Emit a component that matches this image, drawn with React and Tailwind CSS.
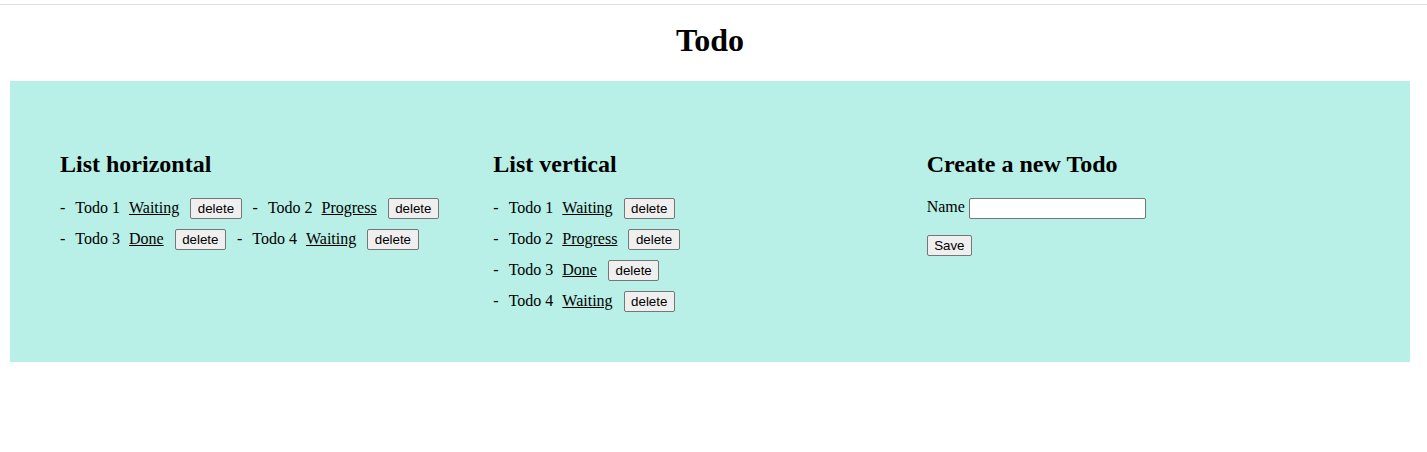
import { useState } from 'react';

const initialTodos = [
  { id: 1, name: 'Todo 1', status: 'Waiting' },
  { id: 2, name: 'Todo 2', status: 'Progress' },
  { id: 3, name: 'Todo 3', status: 'Done' },
  { id: 4, name: 'Todo 4', status: 'Waiting' },
];

const serif = "font-['Liberation_Serif','Times_New_Roman',serif]";
const btn =
  "font-['Liberation_Sans',Arial,sans-serif] text-[13.33px] leading-[15px] text-black bg-[#efefef] border border-[#767676] rounded-[2px] px-[6.5px] pt-[2px] pb-[2px] cursor-pointer hover:bg-[#e5e5e5]";

function TodoItem({ todo, onDelete }) {
  return (
    <div className="inline-flex items-baseline h-[21px]">
      <span>-</span>
      <span className="ml-[10px]">{todo.name}</span>
      <a href="#" className="ml-[9px] underline text-black">
        {todo.status}
      </a>
      <button className={`${btn} ml-[11px]`} onClick={() => onDelete(todo.id)}>
        delete
      </button>
    </div>
  );
}

export default function App() {
  const [todos, setTodos] = useState(initialTodos);
  const [name, setName] = useState('');

  const handleDelete = (id) => setTodos(todos.filter((t) => t.id !== id));

  // 新しいTodoを追加
  const handleSave = (e) => {
    e.preventDefault();
    if (!name.trim()) return;
    setTodos([...todos, { id: Date.now(), name, status: 'Waiting' }]);
    setName('');
  };

  return (
    <div className={`${serif} text-[16px] leading-[18px] text-black bg-white min-h-[452px]`}>
      <div className="pt-[4px]">
        <div className="h-px bg-[#dedede]" />
      </div>
      <h1 className="text-[32px] leading-[37px] font-bold text-center mt-[17px] mb-[22px] w-[1420px]">
        Todo
      </h1>

      <div className="w-[1420px] px-[10px]">
        <div className="bg-[#b8efe6] p-[50px] grid grid-cols-3">
          <div>
            <h2 className="text-[24px] leading-[28px] font-bold mt-[19px] mb-[20px]">List horizontal</h2>
            <div className="flex flex-wrap gap-x-[11px] gap-y-[10px]">
              {todos.map((t) => (
                <TodoItem key={t.id} todo={t} onDelete={handleDelete} />
              ))}
            </div>
          </div>

          <div>
            <h2 className="text-[24px] leading-[28px] font-bold mt-[19px] mb-[20px]">List vertical</h2>
            <div className="flex flex-col gap-[10px]">
              {todos.map((t) => (
                <div key={t.id}>
                  <TodoItem todo={t} onDelete={handleDelete} />
                </div>
              ))}
            </div>
          </div>

          <div>
            <h2 className="text-[24px] leading-[28px] font-bold mt-[19px] mb-[20px]">Create a new Todo</h2>
            <form onSubmit={handleSave}>
              <div className="flex items-baseline h-[21px]">
                <label>Name</label>
                <input
                  type="text"
                  value={name}
                  onChange={(e) => setName(e.target.value)}
                  className="ml-[4px] w-[177px] h-[21px] bg-white border border-[#767676] rounded-[2px] px-[2px] font-['Liberation_Sans',Arial,sans-serif] text-[13.33px] self-center"
                />
              </div>
              <button type="submit" className={`${btn} mt-[16px]`}>
                Save
              </button>
            </form>
          </div>
        </div>
      </div>
    </div>
  );
}
